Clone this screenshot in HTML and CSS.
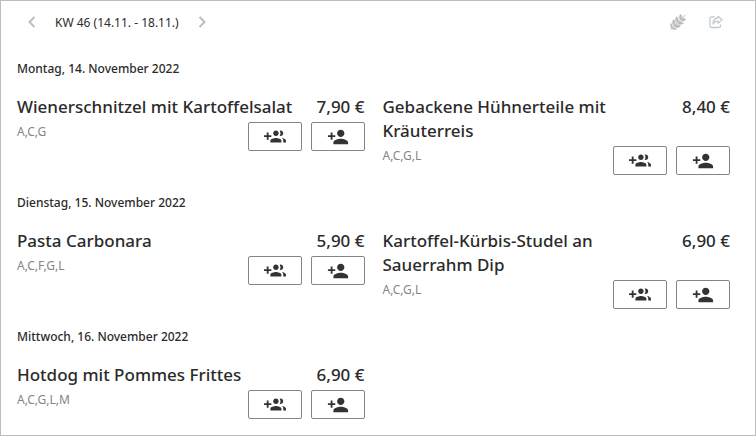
FILE: index.html
```html
<!DOCTYPE html>
<html lang="de">
<head>
    <meta charset="UTF-8">
    <meta name="viewport" content="width=device-width, initial-scale=1.0">
    <title>Speiseplan</title>
    <link rel="stylesheet" href="styles.css">
</head>
<body>
    <!-- Icons used by the order buttons -->
    <svg class="sprite" aria-hidden="true">
        <symbol id="group-add" viewBox="0 0 24 24">
            <path d="M8 10H5V7H3v3H0v2h3v3h2v-3h3v-2zm10 1c1.66 0 2.99-1.34 2.99-3S19.66 5 18 5c-.32 0-.63.05-.91.14.57.81.9 1.79.9 2.86s-.34 2.04-.9 2.86c.28.09.59.14.91.14zm-5 0c1.66 0 2.99-1.34 2.99-3S14.66 5 13 5c-1.66 0-3 1.34-3 3s1.34 3 3 3zm6.62 2.16c.83.73 1.38 1.66 1.38 2.84v2h3v-2c0-1.54-2.37-2.49-4.38-2.84zM13 13c-2 0-6 1-6 3v2h12v-2c0-2-4-3-6-3z"/>
        </symbol>
        <symbol id="person-add" viewBox="0 0 24 24">
            <path d="M15 12c2.21 0 4-1.79 4-4s-1.79-4-4-4-4 1.79-4 4 1.79 4 4 4zm-9-2V7H4v3H1v2h3v3h2v-3h3v-2H6zm9 4c-2.67 0-8 1.34-8 4v2h16v-2c0-2.66-5.33-4-8-4z"/>
        </symbol>
    </svg>

    <div class="page">
        <header class="toolbar">
            <nav class="week">
                <button class="icon-btn" aria-label="Vorige Woche">
                    <svg width="10" height="12" viewBox="0 0 10 12"><path class="arrow" d="M7.500 1L2.500 6l5 5"/></svg>
                </button>
                <span class="week-label">KW 46 (14.11. - 18.11.)</span>
                <button class="icon-btn" aria-label="Nächste Woche">
                    <svg width="10" height="12" viewBox="0 0 10 12"><path class="arrow" d="M2.500 1l5 5-5 5"/></svg>
                </button>
            </nav>
            <div class="tools">
                <button class="icon-btn" aria-label="Allergene">
                    <svg width="16" height="16" viewBox="0 0 16 16">
                        <path class="stem" d="M.5 15.500L15.500 .8"/>
                        <path class="leaf" d="M10.300 5.700C8.700 3.800 8.800 1.600 10.700.2c1.600 1.600 1.500 3.700-.4 5.500zM10.300 5.700c1.900 1.700 4.100 1.600 5.500-.3-1.600-1.500-3.700-1.400-5.500.3zM7.200 8.800C4.900 6.700 4.800 4.200 6.800 2.400c2.100 1.900 2.200 4.300.4 6.400zM7.200 8.800c2.100 2.300 4.600 2.300 6.400.3-1.900-2.100-4.300-2.100-6.400-.3zM4.100 11.900C1.800 9.800 1.700 7.300 3.700 5.500c2.100 1.900 2.200 4.300.4 6.400zM4.100 11.900c2.100 2.300 4.600 2.300 6.400.3-1.900-2.100-4.300-2.100-6.400-.3zM1.700 14.300C.1 12.800 0 11 .9 9.300c1.600 1.200 1.900 3.200.8 5zM1.700 14.300c1.500 1.600 3.300 1.700 5 .8-1.200-1.600-3.200-1.900-5-.8z"/>
                    </svg>
                </button>
                <button class="icon-btn" aria-label="Teilen">
                    <svg width="14" height="14" viewBox="0 0 14 14">
                        <path class="share" d="M5.500 2H2.500Q1 2 1 3.500v7.500Q1 12.500 2.500 12.500h7.500Q11.500 12.500 11.500 11V9.500"/>
                        <path class="share" d="M9 1.200L13 4.700 9 8.200V6.200C6.500 6.200 5 7 4 9c0-3.500 1.800-5.700 5-6z"/>
                    </svg>
                </button>
            </div>
        </header>

        <main>
            <section class="day">
                <h2 class="date">Montag, 14. November 2022</h2>
                <div class="meals">
                    <article class="meal">
                        <h3 class="name">Wienerschnitzel mit Kartoffelsalat</h3>
                        <span class="price">7,90 €</span>
                        <div class="actions">
                            <span class="allergens">A,C,G</span>
                            <button class="order" aria-label="Für Gruppe hinzufügen"><svg><use href="#group-add"/></svg></button>
                            <button class="order" aria-label="Für mich hinzufügen"><svg><use href="#person-add"/></svg></button>
                        </div>
                    </article>
                    <article class="meal">
                        <h3 class="name">Gebackene Hühnerteile mit Kräuterreis</h3>
                        <span class="price">8,40 €</span>
                        <div class="actions">
                            <span class="allergens">A,C,G,L</span>
                            <button class="order" aria-label="Für Gruppe hinzufügen"><svg><use href="#group-add"/></svg></button>
                            <button class="order" aria-label="Für mich hinzufügen"><svg><use href="#person-add"/></svg></button>
                        </div>
                    </article>
                </div>
            </section>

            <section class="day">
                <h2 class="date">Dienstag, 15. November 2022</h2>
                <div class="meals">
                    <article class="meal">
                        <h3 class="name">Pasta Carbonara</h3>
                        <span class="price">5,90 €</span>
                        <div class="actions">
                            <span class="allergens">A,C,F,G,L</span>
                            <button class="order" aria-label="Für Gruppe hinzufügen"><svg><use href="#group-add"/></svg></button>
                            <button class="order" aria-label="Für mich hinzufügen"><svg><use href="#person-add"/></svg></button>
                        </div>
                    </article>
                    <article class="meal">
                        <h3 class="name">Kartoffel-Kürbis-Studel an Sauerrahm Dip</h3>
                        <span class="price">6,90 €</span>
                        <div class="actions">
                            <span class="allergens">A,C,G,L</span>
                            <button class="order" aria-label="Für Gruppe hinzufügen"><svg><use href="#group-add"/></svg></button>
                            <button class="order" aria-label="Für mich hinzufügen"><svg><use href="#person-add"/></svg></button>
                        </div>
                    </article>
                </div>
            </section>

            <section class="day">
                <h2 class="date">Mittwoch, 16. November 2022</h2>
                <div class="meals">
                    <article class="meal">
                        <h3 class="name">Hotdog mit Pommes Frittes</h3>
                        <span class="price">6,90 €</span>
                        <div class="actions">
                            <span class="allergens">A,C,G,L,M</span>
                            <button class="order" aria-label="Für Gruppe hinzufügen"><svg><use href="#group-add"/></svg></button>
                            <button class="order" aria-label="Für mich hinzufügen"><svg><use href="#person-add"/></svg></button>
                        </div>
                    </article>
                </div>
            </section>
        </main>
    </div>
</body>
</html>
```
FILE: styles.css
```css
* {
    box-sizing: border-box;
}
body {
    margin: 0;
    background-color: #fff;
    color: #2b2b2b;
    font-family: "Segoe UI", "Noto Sans", "Open Sans", sans-serif;
    font-size: 12px;
}
.sprite {
    display: none;
}
.page {
    min-height: 100vh;
    padding: 10px 25px 11px 16px;
    border: 1px solid #bdbdbd;
}
.toolbar {
    display: flex;
    justify-content: space-between;
    align-items: center;
    height: 22px;
    padding: 0 7px 0 10px;
}
.week {
    display: flex;
    align-items: center;
    gap: 18px;
}
.tools {
    display: flex;
    align-items: center;
    gap: 23px;
}
.icon-btn {
    display: flex;
    padding: 0;
    border: 0;
    background: none;
}
.arrow {
    fill: none;
    stroke: #bdbdbd;
    stroke-width: 2;
}
.stem {
    stroke: #bdbdbd;
    stroke-width: 1;
}
.leaf {
    fill: #bdbdbd;
    stroke: #bdbdbd;
    stroke-width: 0.4;
}
.share {
    fill: none;
    stroke: #c4c8d0;
    stroke-width: 1.3;
    stroke-linejoin: round;
}
.day {
    padding-top: 26px;
}
.day + .day {
    padding-top: 18px;
}
.date {
    margin: 0 0 16px;
    font-size: 12px;
    font-weight: 500;
    line-height: 20px;
}
.meals {
    display: grid;
    grid-template-columns: 1fr 1fr;
    column-gap: 18px;
}
.meal {
    display: grid;
    grid-template-columns: 1fr auto;
    align-content: start;
}
.name,
.price {
    margin: 0;
    font-size: 17px;
    font-weight: 500;
    line-height: 24px;
}
.price {
    padding-left: 18px;
    text-align: right;
}
.actions {
    display: flex;
    grid-column: 1 / -1;
    gap: 9px;
    padding-top: 3px;
}
.allergens {
    flex: 1;
    color: #858585;
    line-height: 20px;
}
.order {
    display: flex;
    align-items: center;
    justify-content: center;
    width: 54px;
    height: 29px;
    padding: 0;
    border: 1px solid #858585;
    border-radius: 2px;
    background-color: #fff;
}
.order svg {
    width: 22px;
    height: 22px;
    fill: #333;
}
```
